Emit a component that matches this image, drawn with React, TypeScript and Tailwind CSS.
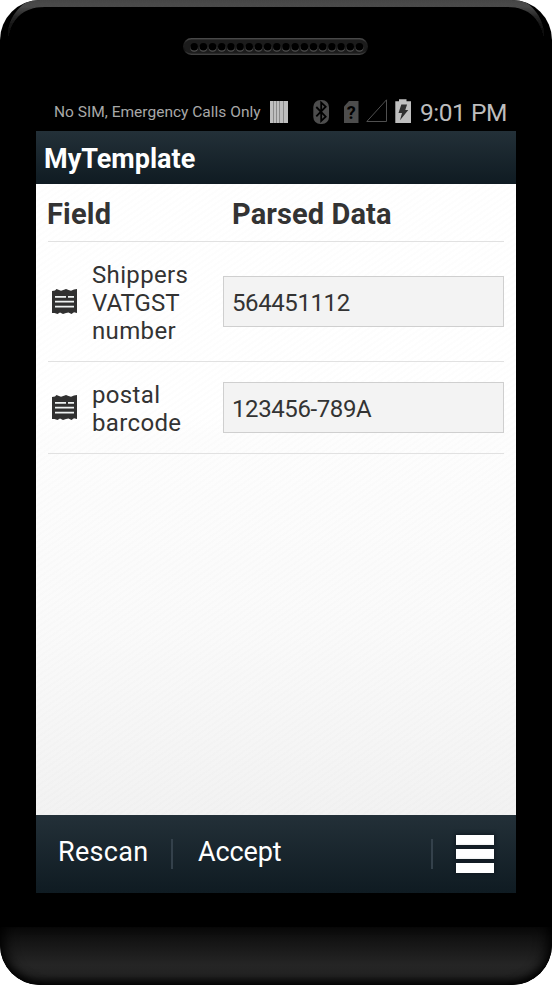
import React from "react";

function Bevel() {
  return (
    <svg className="block h-[48px] w-full" viewBox="0 0 552 48">
      <defs>
        <linearGradient id="bevel" x1="0" y1="0" x2="0" y2="42" gradientUnits="userSpaceOnUse">
          <stop offset="0" stopColor="#454545" />
          <stop offset=".15" stopColor="#4b4b4b" />
          <stop offset=".35" stopColor="#2c2c2c" />
          <stop offset=".6" stopColor="#151515" />
          <stop offset="1" stopColor="#000" />
        </linearGradient>
        <filter id="soft" x="-5%" y="-20%" width="110%" height="140%">
          <feGaussianBlur stdDeviation=".4" />
        </filter>
      </defs>
      <path
        d="M8 42C5 24 17 3 36 -2H516C535 3 547 24 544 42C542 20 530 7 507 7H45C22 7 10 20 8 42Z"
        fill="url(#bevel)"
        filter="url(#soft)"
      />
    </svg>
  );
}

function Speaker() {
  const holes = Array.from({ length: 19 }, (_, i) => 11.2 + i * 9.18);
  return (
    <svg className="-mt-[10px] ml-[183px] block h-[17px] w-[185px]" viewBox="0 0 185 17">
      <defs>
        <linearGradient id="grille" x1="0" y1="0" x2="0" y2="1">
          <stop offset="0" stopColor="#484848" />
          <stop offset=".25" stopColor="#222" />
          <stop offset=".75" stopColor="#161616" />
          <stop offset="1" stopColor="#404040" />
        </linearGradient>
      </defs>
      <rect x=".75" y=".75" width="183.5" height="15.5" rx="7.7" fill="#1c1c1c" stroke="url(#grille)" strokeWidth="1.5" />
      {holes.map((x) => (
        <g key={x}>
          <circle cx={x} cy="9.8" r="3.9" fill="#505050" />
          <circle cx={x} cy="8.7" r="3.8" fill="#000" />
        </g>
      ))}
    </svg>
  );
}

function StatusIcons() {
  return (
    <svg className="block h-[28px] w-[146px] shrink-0" viewBox="268 98 146 28">
      <rect x="270" y="101" width="18" height="22" fill="#8a8a8a" />
      <path d="M270 101h3v22h-3zM274 101h2v22h-2zM277 101h2v22h-2zM280 101h3v22h-3zM284 101h4v22h-4z" fill="#bfbfbf" />
      <rect x="313.3" y="100" width="15.7" height="24" rx="7" fill="#4d4d4d" />
      <path d="M316.300 107l9.400 9.700-4.500 4.200v-18.400l4.500 4.200-9.400 9.700" fill="none" stroke="#000" strokeWidth="1.800" />
      <path d="M349 101h9.500v22H344v-16.500z" fill="#4d4d4d" />
      <text x="351.300" y="119" textAnchor="middle" fontFamily="Roboto, sans-serif" fontSize="18" fontWeight="700" fill="#000">?</text>
      <path d="M366.800 121.500L386.500 99.800v21.700z" fill="none" stroke="#505050" strokeWidth="1" />
      <path d="M399 99.300h7.500v2h4.500v21.700h-15.700v-21.700h3.700z" fill="#bfbfbf" />
      <path d="M401.300 104.500h5.800l-1.800 5.500h3l-8.300 10.300 2-7.300h-3.500z" fill="#303030" />
    </svg>
  );
}

function DocumentIcon() {
  return (
    <svg className="block h-[25px] w-[25px] shrink-0" viewBox="0 0 25 25">
      <path
        d="M0 2L3 1.500 4.500 0 7 1 9 1.700 12 .8 14 0 16.500 1 19 1.700 22 .5 25 0V24L22 23.300 19.500 25 16.500 23.500 14 24 11 25 8 23.500 5.500 25 2.500 24 0 24Z"
        fill="#303030"
      />
      <path d="M3 7.800h11M16 7.800h6M3 12.700h19M3 17.700h19" stroke="#eef2f2" strokeWidth="1.700" />
    </svg>
  );
}

type FieldRowProps = { lines: string[]; value: string; height: string };

function FieldRow({ lines, value, height }: FieldRowProps) {
  return (
    <div className={`flex items-center border-b border-[#e1e1e1] ${height}`}>
      <div className="ml-1">
        <DocumentIcon />
      </div>
      <div className="ml-[15px] mt-[2px] w-[131px] text-[24px] leading-[28px] tracking-[0.35px]">
        {lines.map((line) => (
          <div key={line} className={line === "VATGST" ? "tracking-[0px]" : ""}>
            {line}
          </div>
        ))}
      </div>
      <div className="flex h-[51px] w-[281px] items-center border border-[#cfcfcf] bg-[#f3f3f3] pl-[8px] pt-[3px] text-[24px] tracking-[-0.4px]">
        {value}
      </div>
    </div>
  );
}

function MenuIcon() {
  return (
    <div className="flex w-[38px] flex-col gap-1">
      <div className="h-[10px] bg-white shadow-[0_0_4px_1px_#101820]" />
      <div className="h-[10px] bg-white shadow-[0_0_4px_1px_#101820]" />
      <div className="h-[10px] bg-white shadow-[0_0_4px_1px_#101820]" />
    </div>
  );
}

export default function App() {
  return (
    <div className="h-[985px] w-[552px] overflow-hidden bg-white font-['Roboto',sans-serif]">
      <div className="flex h-full w-full flex-col overflow-hidden rounded-[40px] bg-black">
        <Bevel />
        <Speaker />
        <div className="mt-[43px] flex h-[28px] items-center whitespace-nowrap pl-[54px] text-[#bdbdbd]">
          <div className="w-[214px] pt-px text-[15.5px] tracking-[0.01px] text-[#a8a8a8]">No SIM, Emergency Calls Only</div>
          <StatusIcons />
          <div className="ml-[6px] pt-[2px] text-[24.5px] leading-[28px] tracking-[-0.45px]">9:01 PM</div>
        </div>
        <div className="mx-9 mt-[5px] flex h-[762px] shrink-0 flex-col">
          <div className="flex h-[53px] items-center bg-gradient-to-b from-[#233038] to-[#0f1b22] pl-2 pt-[3px] text-[27px] font-bold text-white">
            MyTemplate
          </div>
          <div className="h-[631px] bg-[linear-gradient(to_bottom,#fff_0%,#fff_37%,#fdfdfd_40%,#fafafa_70%,#f2f2f2_100%)] text-[#333]">
            <div className="h-full bg-[repeating-linear-gradient(145deg,transparent_0px,transparent_3px,rgba(0,0,0,0.008)_3px,rgba(0,0,0,0.008)_5px)] px-3">
              <div className="flex h-[58px] items-center border-b border-[#e1e1e1] pt-[5px] text-[29px] font-bold">
                <div className="-ml-px w-[185px] tracking-[0.2px]">Field</div>
                <div className="tracking-[0.1px]">Parsed Data</div>
              </div>
              <FieldRow lines={["Shippers", "VATGST", "number"]} value="564451112" height="h-[120px]" />
              <FieldRow lines={["postal", "barcode"]} value="123456-789A" height="h-[92px]" />
            </div>
          </div>
          <div className="flex h-[78px] items-center bg-gradient-to-b from-[#233038] to-[#0f1b22] text-[27px] text-white">
            <div className="w-[135px] pb-[3px] pl-[22px] tracking-[0.3px]">Rescan</div>
            <div className="h-[30px] w-[2px] bg-[#34414b]" />
            <div className="w-[258px] pb-[3px] pl-[25px] tracking-[-0.1px]">Accept</div>
            <div className="h-[30px] w-[2px] bg-[#34414b]" />
            <div className="ml-[23px]">
              <MenuIcon />
            </div>
          </div>
        </div>
        <div className="mt-[34px] h-[58px] shrink-0 rounded-b-[40px] bg-[linear-gradient(to_bottom,#0a0a0a_0%,#252525_65%,#222_100%)] shadow-[inset_12px_0_14px_-8px_#000,inset_-12px_0_14px_-8px_#000,inset_0_-9px_10px_-5px_#000]" />
      </div>
    </div>
  );
}
